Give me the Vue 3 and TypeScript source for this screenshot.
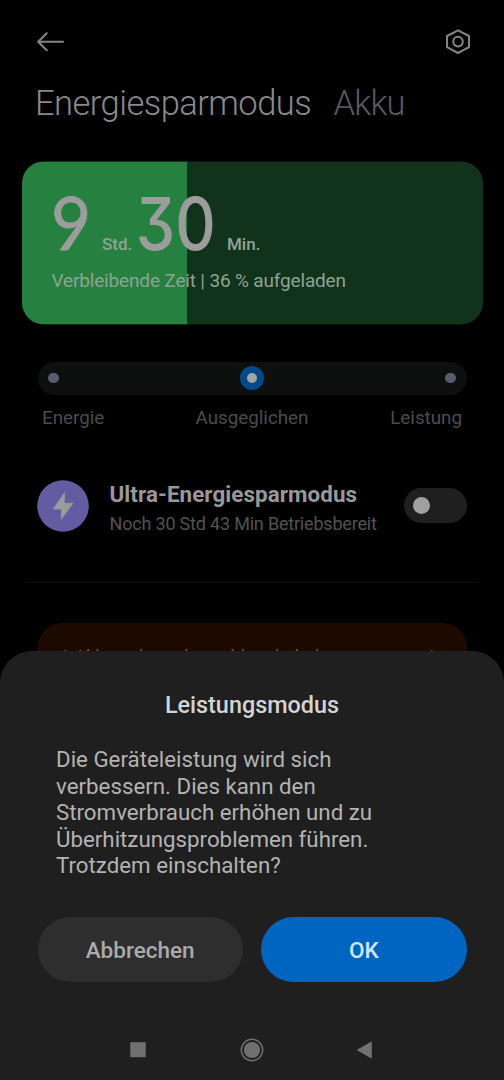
<script setup lang="ts">
import { ref } from 'vue'

const charge = ref(36)
const modes = ['Energie', 'Ausgeglichen', 'Leistung']
const activeMode = ref(1)
const ultraOn = ref(false)
const messageLines = [
  'Die Geräteleistung wird sich',
  'verbessern. Dies kann den',
  'Stromverbrauch erhöhen und zu',
  'Überhitzungsproblemen führen.',
  'Trotzdem einschalten?',
]
</script>

<template>
  <div class="screen">
    <header class="topbar">
      <svg class="back" width="28" height="20" viewBox="0 0 28 20">
        <path d="M10.7 1.2 L2.2 9.7 L10.7 18.2 M2.5 9.7 H27" />
      </svg>
      <svg class="gear" width="26" height="28" viewBox="0 0 26 28">
        <path d="M13 2.3 L24 8 V19.2 L13 25 L2 19.2 V8 Z" />
        <circle cx="13" cy="13.6" r="4.8" />
      </svg>
    </header>

    <nav class="tabs">
      <span class="tab current">Energiesparmodus</span>
      <span class="tab other">Akku</span>
    </nav>

    <section class="battery">
      <div class="fill" :style="{ width: charge + '%' }"></div>
      <div class="time">
        <span class="num nine">9</span>
        <span class="unit std">Std.</span>
        <span class="num">3</span>
        <span class="num">0</span>
        <span class="unit min">Min.</span>
      </div>
      <p class="remaining">Verbleibende Zeit | {{ charge }} % aufgeladen</p>
    </section>

    <div class="slider">
      <span v-for="(m, i) in modes" :key="m" class="stop" :class="{ active: i === activeMode }"><i></i></span>
    </div>
    <div class="labels">
      <span v-for="m in modes" :key="m">{{ m }}</span>
    </div>

    <section class="ultra">
      <svg class="bolt" width="52" height="52" viewBox="0 0 52 52">
        <circle cx="26" cy="26" r="25.8" fill="#655ba2" />
        <path d="M27.6 12.8 L16.2 29 H24.6 L24.2 39.2 L36 23.2 H27.2 Z" fill="#9b9b9b" stroke="#9b9b9b" stroke-width=".8" stroke-linejoin="round" />
      </svg>
      <div class="ultra-text">
        <div class="ultra-title"><span>Ultra-Energiesparmodus</span></div>
        <div class="ultra-sub"><span>Noch 30 Std 43 Min Betriebsbereit</span></div>
      </div>
      <div class="switch" :class="{ on: ultraOn }"><i></i></div>
    </section>

    <hr class="rule" />

    <section class="warning">
      <span>1 Akkuverbrauchsproblem behoben</span>
      <svg width="10" height="16" viewBox="0 0 10 16"><path d="M2 1.5 L8 8 L2 14.5" /></svg>
    </section>

    <div class="sheet">
      <h2>Leistungsmodus</h2>
      <p class="message"><span v-for="line in messageLines" :key="line">{{ line }}</span></p>
      <div class="actions">
        <button class="cancel">Abbrechen</button>
        <button class="ok">OK</button>
      </div>
      <div class="navbar">
        <svg width="24" height="24" viewBox="0 0 24 24"><rect x="4.3" y="4.2" width="15.4" height="15" fill="#707070" /></svg>
        <svg width="24" height="24" viewBox="0 0 24 24">
          <circle cx="12" cy="12" r="10.7" fill="none" stroke="#707070" stroke-width="1.5" />
          <circle cx="12" cy="12" r="8.1" fill="#707070" />
        </svg>
        <svg width="24" height="24" viewBox="0 0 24 24"><path d="M2.6 12 L17.8 3.2 V20.8 Z" fill="#707070" /></svg>
      </div>
    </div>
  </div>
</template>

<style>
html,
body {
  margin: 0;
  background: #000;
}
</style>

<style scoped>
.screen {
  position: relative;
  width: 504px;
  height: 1080px;
  overflow: hidden;
  background: #000;
  font-family: Roboto, 'Liberation Sans', sans-serif;
}
.topbar {
  display: flex;
  justify-content: space-between;
  align-items: center;
  height: 28px;
  padding: 28px 33px 0 36px;
}
.topbar svg {
  fill: none;
  stroke: #858585;
  stroke-width: 2;
  stroke-linejoin: round;
  stroke-linecap: round;
}
.tabs {
  display: flex;
  height: 40px;
  margin: 27px 0 0 35px;
  font-size: 34.5px;
  line-height: 40px;
  font-weight: 300;
  letter-spacing: -0.54px;
  white-space: nowrap;
}
.current { width: 298.5px; color: #8a8a8a; }
.other { color: #5a5a5a; letter-spacing: -0.8px; }
.battery {
  position: relative;
  box-sizing: border-box;
  width: 461px;
  height: 163px;
  margin: 38px 0 0 21.5px;
  padding-left: 30px;
  border-radius: 22px;
  background: #11331b;
  overflow: hidden;
  transform: translateY(0.4px);
  margin-top: 38px;
}
.fill {
  position: absolute;
  inset: 0 auto 0 0;
  background: #26803f;
}
.time {
  position: relative;
  display: flex;
  align-items: baseline;
  height: 104px;
  line-height: 123px;
  color: #9c9c9c;
}
.num {
  width: 40px;
  display: flex;
  justify-content: center;
  font-family: Inter, Roboto, sans-serif;
  font-size: 73px;
  font-weight: 450;
  font-feature-settings: 'cv09';
  transform: translateX(-1.5px) scaleX(0.86);
}
.nine {
  font-family: Lato, Inter, sans-serif;
  font-weight: 400;
  -webkit-text-stroke: 0.8px #9c9c9c;
  transform: translateX(-1px) scaleX(0.95);
}
.unit {
  font-size: 17px;
  font-weight: 500;
  color: #92a396;
}
.std { width: 35px; margin-left: 10.5px; }
.min { margin-left: 10px; }
.remaining {
  position: relative;
  margin: 4px 0 0;
  font-size: 19px;
  line-height: 24px;
  letter-spacing: -0.16px;
  color: #8fa394;
  white-space: nowrap;
}
.slider {
  display: flex;
  justify-content: space-between;
  align-items: center;
  box-sizing: border-box;
  width: 429px;
  height: 33px;
  margin: 37.5px 0 0 37.5px;
  padding: 0 4px;
  border-radius: 17px;
  background: #0e100f;
}
.stop {
  display: flex;
  align-items: center;
  justify-content: center;
  width: 24px;
  height: 24px;
  border-radius: 50%;
}
.stop i {
  width: 10.5px;
  height: 10.5px;
  border-radius: 50%;
  background: #5b5a70;
}
.stop.active { background: #04498a; }
.stop.active i { background: #a5a5a5; }
.labels {
  display: grid;
  grid-template-columns: 1fr auto 1fr;
  height: 24px;
  margin: 11px 42px 0;
  font-size: 18.8px;
  line-height: 24px;
  color: #4c4c4c;
}
.labels span:last-child { text-align: right; }
.ultra {
  display: flex;
  align-items: center;
  height: 52px;
  margin: 50px 37px 0;
}
.ultra-text { width: 294px; margin-left: 20.5px; padding-top: 7px; white-space: nowrap; }
.ultra-title { font-size: 22.4px; line-height: 29px; font-weight: 700; letter-spacing: 0.08px; color: #999; }
.ultra-sub { font-size: 18px; line-height: 30px; letter-spacing: -0.19px; color: #525252; }
.switch {
  width: 63px;
  height: 35px;
  border-radius: 18px;
  background: #1f1f1f;
  display: flex;
  align-items: center;
}
.switch i {
  width: 17px;
  height: 17px;
  margin-left: 9px;
  border-radius: 50%;
  background: #a0a0a0;
}
.rule {
  height: 1px;
  margin: 50px 25px 0;
  border: 0;
  background: #0d0d0d;
}
.warning {
  display: flex;
  align-items: center;
  justify-content: space-between;
  box-sizing: border-box;
  width: 429px;
  height: 68px;
  margin: 40px 0 0 37.5px;
  padding: 0 28px 0 22px;
  border-radius: 24px;
  background: #1d0b01;
  color: #a5402d;
  font-size: 18px;
  letter-spacing: 0.08px;
}
.warning svg { fill: none; stroke: #a5402d; stroke-width: 2; }
.sheet {
  position: absolute;
  left: 0;
  right: 0;
  bottom: 0;
  height: 429px;
  border-radius: 32px 32px 0 0;
  background: #1f1f1f;
}
h2 {
  margin: 40px 0 0;
  font-size: 23.4px;
  line-height: 28px;
  font-weight: 500;
  text-align: center;
  color: #d4d4d4;
}
.message {
  margin: 27px 0 0 56px;
  font-size: 22.3px;
  line-height: 26.6px;
  color: #b3b3b3;
}
.message span { display: block; white-space: nowrap; }
.actions {
  display: flex;
  gap: 18.5px;
  margin: 38px 37.5px 0;
}
button {
  flex: 1;
  height: 65px;
  padding: 2px 0 0;
  border: 0;
  border-radius: 33px;
  font-family: inherit;
  font-size: 22.5px;
  font-weight: 500;
}
.cancel { background: #2e2e2e; color: #ababab; }
.ok { background: #0065c0; color: #d3e5f5; }
.navbar {
  display: flex;
  justify-content: space-between;
  margin: 56px 126px 0;
}
</style>
